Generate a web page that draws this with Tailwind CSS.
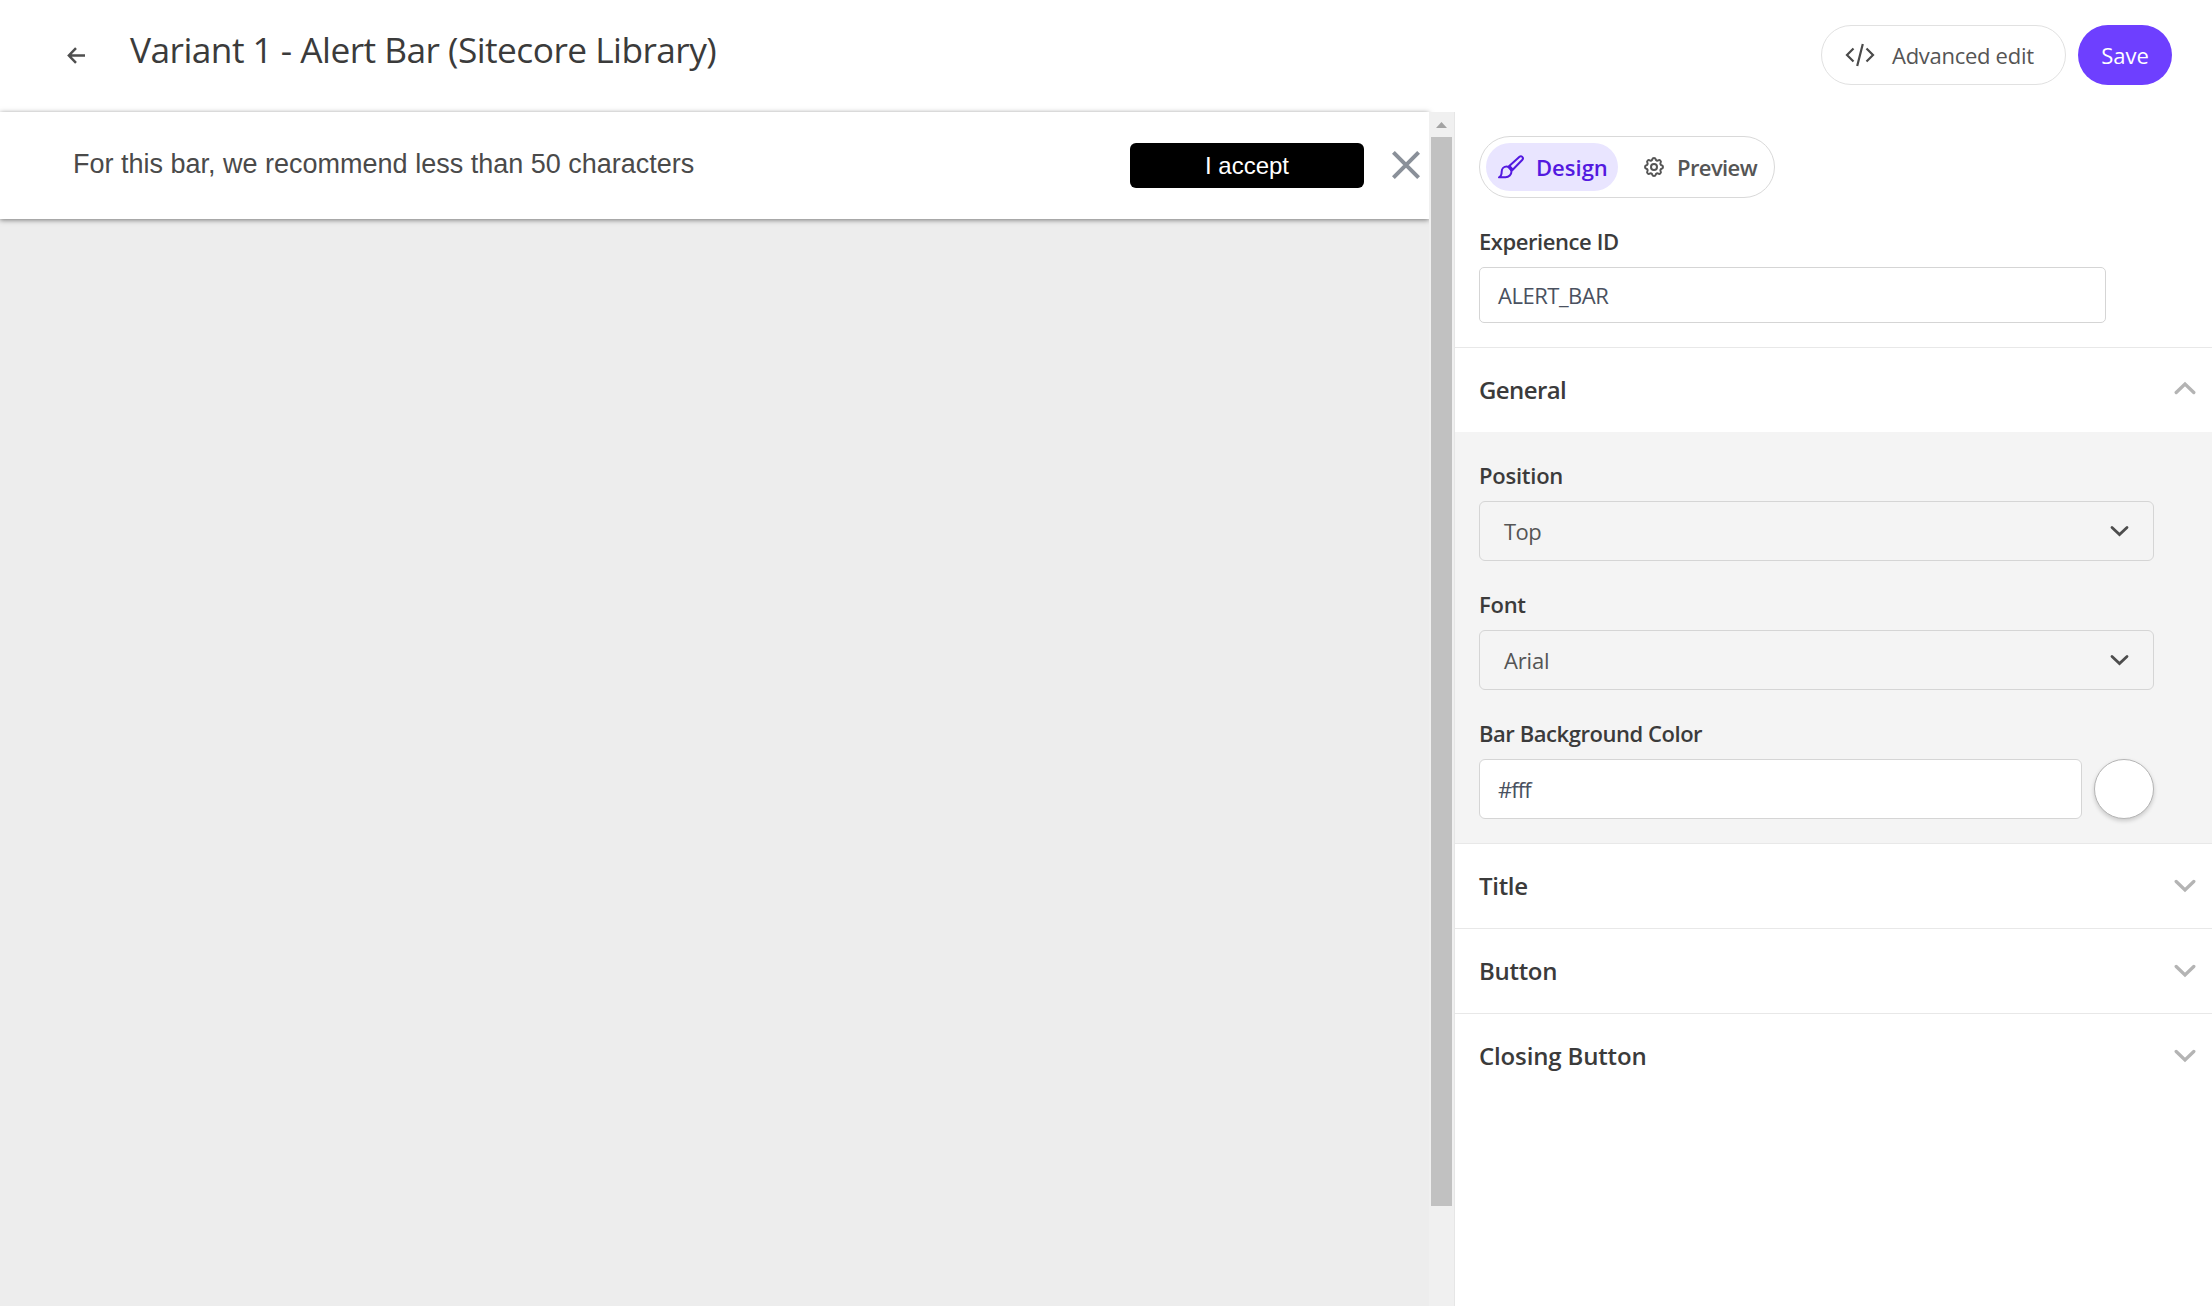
<!DOCTYPE html>
<html lang="en">
<head>
<meta charset="utf-8">
<title>Variant 1 - Alert Bar</title>
<script src="https://cdn.jsdelivr.net/npm/@tailwindcss/browser@4"></script>
</head>
<body class="flex h-[1306px] w-[2212px] flex-col overflow-hidden bg-white font-['Open_Sans',sans-serif] text-[22px] leading-[30px] text-[#3b3b3b]">
<header class="flex h-28 shrink-0 items-start pl-[67px] pr-10">
  <svg class="mt-[47px] h-[17px] w-[19px]" viewBox="0 0 19 17" fill="none" stroke="#4f4f4f" stroke-width="2.5"><path d="M18 8.5H2M9 1.2 1.9 8.5 9 15.8"/></svg>
  <h1 class="ml-11 mt-[25px] text-[35.3px] leading-[48px] tracking-[-0.55px]">Variant 1 - Alert Bar (Sitecore Library)</h1>
  <div class="ml-auto mt-[25px] flex gap-3">
    <button class="flex h-[60px] w-[245px] items-center rounded-full border border-[#e1e1e1] pl-[23px] tracking-[-0.28px] text-[#555]">
      <svg class="mr-[17px] h-6 w-[30px]" viewBox="0 0 30 24" fill="none" stroke="#4a4a4a" stroke-width="2.2"><path d="M8.5 5.5 2 12l6.500 6.500M21.500 5.500 28 12l-6.500 6.500M17.800 1 12.200 23"/></svg>
      Advanced edit
    </button>
    <button class="h-[60px] w-[94px] rounded-full bg-[#6e3fff] text-white">Save</button>
  </div>
</header>
<main class="flex min-h-0 flex-1">
  <section class="w-[1429px] shrink-0 bg-[#ededed] font-['Liberation_Sans',Arial,sans-serif]">
    <div class="flex h-[107px] items-start bg-white pl-[73px] pr-[9px] shadow-[0_1px_5px_rgba(0,0,0,0.5)]">
      <p class="mt-9 text-[27px] leading-[32px] text-[#4a4a4a]">For this bar, we recommend less than 50 characters</p>
      <button class="ml-auto mt-[31px] h-[45px] w-[234px] rounded-md bg-black text-2xl text-white">I accept</button>
      <svg class="ml-7 mt-[39px] size-7" viewBox="0 0 28 28" stroke="#8a9099" stroke-width="4"><path d="M1.400 1.400 26.600 26.600M26.600 1.400 1.400 26.600"/></svg>
    </div>
  </section>
  <div class="flex w-[25px] shrink-0 flex-col bg-[#f0f0f0] pl-[2px]">
    <svg class="ml-[5px] mt-[10px] h-[6px] w-[11px]" viewBox="0 0 11 6"><path d="M5.500 0 11 6H0z" fill="#a3a3a3"/></svg>
    <div class="mt-[9px] h-[1069px] w-[21px] bg-[#c1c1c1]"></div>
  </div>
  <aside class="flex-1 border-l border-[#e6e6e6]">
    <div class="h-[235px] pl-6 pt-6">
      <div class="flex h-[62px] w-[296px] items-center rounded-full border border-[#d9d9d9] pl-[6px] font-semibold">
        <div class="flex h-12 w-[132px] items-center rounded-full bg-[#e9e5ff] pl-3 text-[#5319e0]">
          <svg class="mr-3 h-6 w-[26px]" viewBox="0 0 26 24" fill="none" stroke="currentColor" stroke-width="2" stroke-linejoin="round"><path d="M1 22.300h6.500c3.400 0 6-2.600 6-6 0-2.800-2-4.800-4.800-4.800s-5 2.200-5 5c0 3-.8 5-2.700 5.800z"/><path d="M10.700 11.500 21.500 1.800c1.900-1.600 4.500.9 2.900 2.900L14 15.500"/><path d="M10.500 11l4 4.500" stroke-width="3.400"/></svg>
          Design
        </div>
        <div class="flex items-center pl-6 tracking-[-0.6px] text-[#555]">
          <svg class="mr-[11px] size-6" viewBox="0 0 24 24" fill="none" stroke="currentColor" stroke-width="2"><path d="M10.325 4.317c.426-1.756 2.924-1.756 3.350 0a1.724 1.724 0 0 0 2.573 1.066c1.543-.94 3.310.826 2.370 2.370a1.724 1.724 0 0 0 1.065 2.572c1.756.426 1.756 2.924 0 3.350a1.724 1.724 0 0 0-1.066 2.573c.94 1.543-.826 3.310-2.370 2.370a1.724 1.724 0 0 0-2.572 1.065c-.426 1.756-2.924 1.756-3.350 0a1.724 1.724 0 0 0-2.573-1.066c-1.543.94-3.310-.826-2.370-2.370a1.724 1.724 0 0 0-1.065-2.572c-1.756-.426-1.756-2.924 0-3.350a1.724 1.724 0 0 0 1.066-2.573c-.94-1.543.826-3.310 2.370-2.370 1 .608 2.296.070 2.572-1.065z"/><circle cx="12" cy="12" r="3"/></svg>
          Preview
        </div>
      </div>
      <label class="mt-[28px] block font-semibold tracking-[-0.43px]">Experience ID</label>
      <div class="mt-[11px] flex h-[56px] w-[627px] items-center rounded-[5px] border border-[#d5d5d5] pl-[18px] tracking-[-0.48px] text-[#4a5160]">ALERT_BAR</div>
    </div>
    <div class="flex h-[85px] items-center justify-between border-t border-[#e8e8e8] pl-6 pr-4 text-2xl font-semibold tracking-[-0.6px]">General
      <svg class="mb-1 h-[14px] w-[22px]" viewBox="0 0 22 14" fill="none" stroke="#b4b4b4" stroke-width="3.300" stroke-linecap="round"><path d="M2.200 11.500 11 3l8.800 8.500"/></svg></div>
    <div class="h-[411px] bg-[#f4f4f4] pl-6 pt-7">
      <label class="block font-semibold tracking-[-0.25px]">Position</label>
      <div class="mt-[11px] flex h-[60px] w-[675px] items-center justify-between rounded-[6px] border border-[#d5d5d5] pl-6 pr-[24px] tracking-[-0.5px] text-[#555]">Top
        <svg class="h-3 w-[19px]" viewBox="0 0 19 12" fill="none" stroke="#4d4d4d" stroke-width="2.800" stroke-linecap="round"><path d="M2 2.500 9.500 9.500 17 2.500"/></svg></div>
      <label class="mt-7 block font-semibold tracking-[-0.25px]">Font</label>
      <div class="mt-[11px] flex h-[60px] w-[675px] items-center justify-between rounded-[6px] border border-[#d5d5d5] pl-6 pr-[24px] tracking-[-0.15px] text-[#555]">Arial
        <svg class="h-3 w-[19px]" viewBox="0 0 19 12" fill="none" stroke="#4d4d4d" stroke-width="2.800" stroke-linecap="round"><path d="M2 2.500 9.500 9.500 17 2.500"/></svg></div>
      <label class="mt-7 block font-semibold tracking-[-0.45px]">Bar Background Color</label>
      <div class="mt-[11px] flex gap-3">
        <div class="flex h-[60px] w-[603px] items-center rounded-[6px] border border-[#d5d5d5] bg-white pl-[18px] tracking-[-0.9px] text-[#4a5160]">#fff</div>
        <div class="size-[60px] rounded-full border border-[#b5b5b5] bg-white shadow-[0_2px_4px_rgba(0,0,0,0.18)]"></div>
      </div>
    </div>
    <div class="flex h-[85px] items-center justify-between border-t border-[#e8e8e8] pl-6 pr-4 text-2xl font-semibold tracking-[-0.3px]">Title
      <svg class="h-[14px] w-[22px]" viewBox="0 0 22 14" fill="none" stroke="#b4b4b4" stroke-width="3.300" stroke-linecap="round"><path d="M2.200 2.500 11 11l8.800-8.500"/></svg></div>
    <div class="flex h-[85px] items-center justify-between border-t border-[#e8e8e8] pl-6 pr-4 text-2xl font-semibold tracking-[-0.3px]">Button
      <svg class="h-[14px] w-[22px]" viewBox="0 0 22 14" fill="none" stroke="#b4b4b4" stroke-width="3.300" stroke-linecap="round"><path d="M2.200 2.500 11 11l8.800-8.500"/></svg></div>
    <div class="flex h-[85px] items-center justify-between border-t border-[#e8e8e8] pl-6 pr-4 text-2xl font-semibold tracking-[-0.15px]">Closing Button
      <svg class="h-[14px] w-[22px]" viewBox="0 0 22 14" fill="none" stroke="#b4b4b4" stroke-width="3.300" stroke-linecap="round"><path d="M2.200 2.500 11 11l8.800-8.500"/></svg></div>
  </aside>
</main>
</body>
</html>
